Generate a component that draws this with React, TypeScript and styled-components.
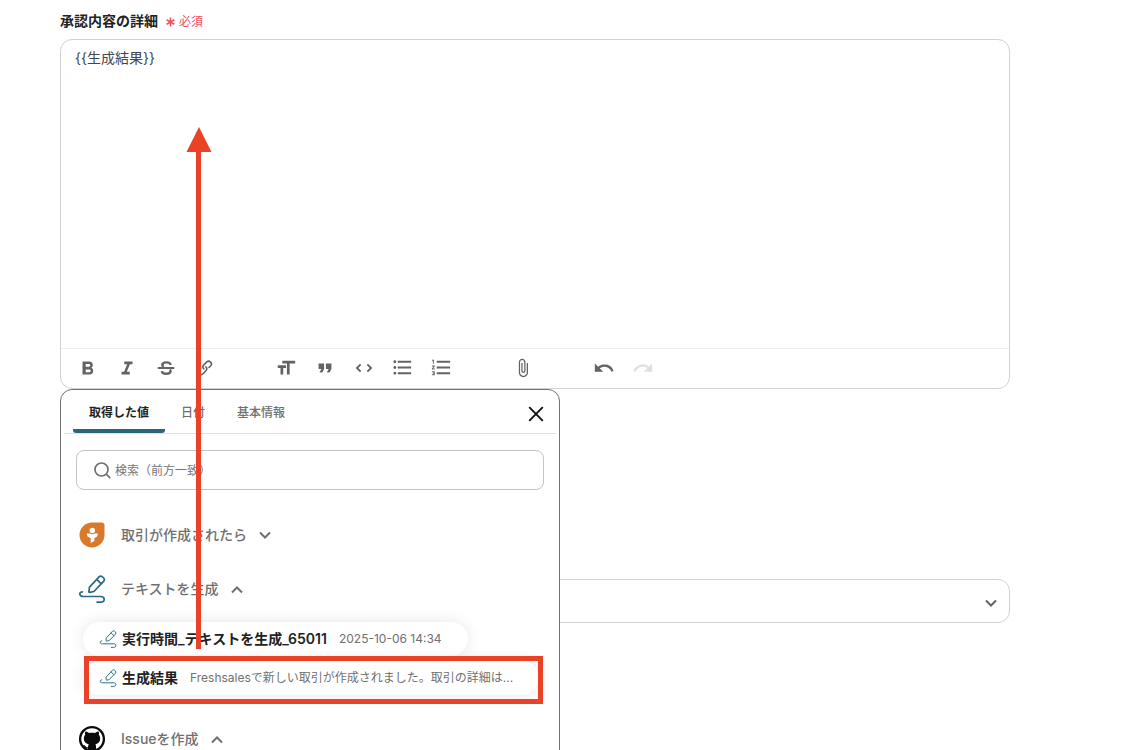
import React from "react";
import styled, { createGlobalStyle, css } from "styled-components";
import { MdAttachFile, MdFormatListBulleted, MdFormatListNumbered } from "react-icons/md";

const GlobalStyle = createGlobalStyle`
  *, *::before, *::after { box-sizing: border-box; }
  body {
    margin: 0;
    background: #fff;
    color: #222;
    font-family: Inter, "Noto Sans CJK JP", sans-serif;
    font-size: 14px;
    line-height: 20px;
  }
  button, input, select, textarea { font: inherit; color: inherit; margin: 0; }
  svg { display: block; flex: none; }
`;

const Page = styled.main`
  height: 100vh;
  overflow: hidden;
  padding: 11px 128px 0 60px;
`;

const FieldLabel = styled.label`
  display: flex;
  align-items: center;
  gap: 8px;
  height: 20px;
  margin-bottom: 8px;
  font-weight: 600;
`;

const Required = styled.span`
  display: inline-flex;
  align-items: center;
  gap: 4px;
  padding-top: 2px;
  color: #f0515f;
  font-size: 12px;
  font-weight: 400;
`;

const EditorArea = styled.div`
  position: relative;
  margin-bottom: 190px;
`;

const Editor = styled.div`
  display: flex;
  flex-direction: column;
  overflow: hidden;
  border: 1px solid #d0d2d8;
  border-radius: 12px;
`;

const EditorText = styled.textarea`
  height: 308px;
  padding: 8px 14px;
  border: 0;
  outline: 0;
  resize: none;
  background: transparent;
  color: #42464e;
`;

const Toolbar = styled.div`
  display: flex;
  gap: 42px;
  height: 40px;
  padding: 0 7px 2px;
  border-top: 1px solid #eeeff0;
`;

const ToolGroup = styled.div`
  display: flex;
`;

const ToolButton = styled.button`
  display: flex;
  align-items: center;
  justify-content: center;
  width: 39px;
  padding: 0;
  border: 0;
  background: none;
  color: #636363;

  &:disabled {
    color: #e0e0e0;
  }
`;

const Picker = styled.section`
  position: absolute;
  top: 350px;
  left: 0;
  z-index: 1;
  width: 500px;
  padding-bottom: 24px;
  border: 1px solid #707375;
  border-radius: 12px;
  background: #fff;
`;

const PickerHeader = styled.header`
  display: flex;
  align-items: stretch;
  justify-content: space-between;
  height: 44px;
  margin: 0 3px;
  padding: 0 9px;
  border-bottom: 1px solid #e2e2e2;
`;

const Tabs = styled.div`
  display: flex;
`;

const Tab = styled.button<{ $active?: boolean }>`
  padding: 3px 16px 0;
  border: 0;
  background: none;
  color: #707070;
  font-size: 12px;
  font-weight: 500;
  ${({ $active }) =>
    $active &&
    css`
      color: #222;
      font-weight: 600;
      background: linear-gradient(#2b657c, #2b657c) bottom / 100% 4px no-repeat;
      border-radius: 3px;
    `}
`;

const CloseButton = styled.button`
  display: flex;
  align-items: center;
  padding: 4px 3px 0;
  border: 0;
  background: none;
  color: #111;
`;

const SearchBox = styled.label`
  display: flex;
  align-items: center;
  gap: 4px;
  height: 40px;
  margin: 16px 15px 31px;
  padding: 0 17px;
  border: 1px solid #c4c4c4;
  border-radius: 8px;
  color: #707070;
`;

const SearchInput = styled.input`
  flex: 1;
  padding: 2px 0 0;
  border: 0;
  outline: 0;
  background: none;
  font-size: 12px;

  &::placeholder {
    color: #777;
    opacity: 1;
  }
`;

const Steps = styled.div`
  display: flex;
  flex-direction: column;
  gap: 26px;
`;

const StepButton = styled.button`
  display: flex;
  align-items: center;
  gap: 15px;
  width: 100%;
  height: 28px;
  padding: 0 17px;
  border: 0;
  background: none;
  color: #707070;
  font-weight: 500;
  text-align: left;
`;

const StepName = styled.span`
  display: flex;
  align-items: center;
  gap: 12px;
`;

const Values = styled.ul`
  display: flex;
  flex-direction: column;
  align-items: flex-start;
  gap: 5px;
  margin: 19px 0 4px;
  padding: 0 20px 0 22px;
  list-style: none;
`;

const ValueItem = styled.li`
  position: relative;
`;

const ValueButton = styled.button`
  display: flex;
  align-items: center;
  height: 34px;
  padding: 0 26px 0 16px;
  border: 0;
  border-radius: 17px;
  background: #fff;
  box-shadow: 0 0 16px rgba(0, 0, 0, 0.1);
  white-space: nowrap;
`;

const ValueName = styled.span`
  margin: 0 12px 0 5px;
  font-weight: 600;
`;

const ValueSample = styled.span`
  color: #707070;
  font-size: 12px;
`;

const Highlight = styled.span`
  position: absolute;
  inset: -5px -4px -9px 1px;
  border: 5px solid #eb4126;
  pointer-events: none;
`;

const Arrow = styled.svg`
  position: absolute;
  top: 88px;
  left: 126px;
  z-index: 2;
  pointer-events: none;
`;

const SelectBox = styled.div`
  position: relative;
  color: #636363;
`;

const Select = styled.select`
  display: block;
  width: 100%;
  height: 44px;
  padding: 0 44px 0 14px;
  border: 1px solid #d0d2d8;
  border-radius: 12px;
  appearance: none;
  background: #fff;
`;

const SelectArrow = styled.span`
  position: absolute;
  top: 4px;
  right: 13px;
  bottom: 0;
  display: flex;
  align-items: center;
  pointer-events: none;
`;

const Glyph = ({ paths, size = 22 }: { paths: string[]; size?: number }) => (
  <svg width={size} height={size} viewBox="0 0 24 24" fill="currentColor" aria-hidden>
    {paths.map((d) => (
      <path key={d} d={d} />
    ))}
  </svg>
);

const StrikeIcon = () => (
  <svg width="22" height="22" viewBox="0 0 24 24" fill="none" stroke="currentColor" aria-hidden>
    <path d="M17 8.500C16.800 6.600 15 5.800 12.500 5.800 10 5.800 8 6.700 8 8.600c0 1 .5 1.700 1.500 2.200M7.500 15.400c.2 2 2.200 2.900 4.800 2.900 2.700 0 4.600-.9 4.600-2.800 0-.7-.2-1.200-.7-1.700" strokeWidth="2.600" />
    <path d="M3 12h18" strokeWidth="2.200" />
  </svg>
);

const AsteriskIcon = () => (
  <svg width="9" height="10" viewBox="0 0 9 10" stroke="currentColor" strokeWidth="1.500" aria-hidden>
    <path d="M4.500 .5v9M.6 2.750l7.800 4.500M8.400 2.750l-7.800 4.500" />
  </svg>
);

const Chevron = ({ up = false }: { up?: boolean }) => (
  <svg width="12" height="12" viewBox="0 0 12 12" fill="none" stroke="currentColor" strokeWidth="2" aria-hidden>
    <path d={up ? "M1 9.500l5-5 5 5" : "M1 3.500l5 5 5-5"} />
  </svg>
);

const PenIcon = ({ size, thin = false }: { size: number; thin?: boolean }) => (
  <svg
    width={size}
    height={size}
    viewBox="0 0 28 28"
    fill="none"
    stroke="#286a84"
    strokeWidth={thin ? 1.5 : 1.7}
    strokeLinecap="round"
    strokeLinejoin="round"
    aria-hidden
  >
    <path d="M11.500 12.200L21 1.900q1.600-1.500 3.400 0l1.100 1q1.700 1.700.1 3.400l-9.700 10.200-4.200.9q-1 .1-.8-.9zM18.700 4.400l4.500 4.400" />
    <path d="M4.300 16.800C1.800 17.300 1.500 18.600 2 19.800c.5 1.500 1.800 1.700 3.400 1.700h17.200c2.300 0 3.600.9 3.600 2.700 0 1.900-1.300 2.900-3.600 2.900h-3.500" />
  </svg>
);

const FreshsalesIcon = () => (
  <svg width="28" height="28" viewBox="0 0 28 28" aria-hidden>
    <path d="M14 1.500h9.500a3 3 0 0 1 3 3V14A12.500 12.500 0 1 1 14 1.500z" fill="#d9792b" />
    <circle cx="14.300" cy="9.500" r="2.700" fill="#fff" />
    <path d="M8.800 12.600h2.700q2.800 1.300 5.600 0h2.700c.2 2.300-1 3.900-3.400 4.500v3L12.700 22v-4.900C9.900 16.500 8.600 14.900 8.800 12.600z" fill="#fff" />
  </svg>
);

const GithubIcon = () => (
  <svg width="28" height="28" viewBox="0 0 28 28" aria-hidden>
    <circle cx="14" cy="14" r="11.900" fill="#fff" stroke="#0b0b0b" strokeWidth="2.300" />
    <path
      fill="#0b0b0b"
      d="M7.400 6.500c1.300 0 2.600.7 3.600 1.500 1.900-.4 4.100-.4 6 0 1-.8 2.300-1.500 3.600-1.500.5 1.200.5 2.400.2 3.300 1 1.100 1.300 2.300 1.300 3.700 0 3.600-2 5.200-4.700 5.700.4.600.6 1.300.6 2.200v3.900q-4 1.400-8 0v-2c-2.200.4-3-.4-3.700-1.600-.4-.7-.8-1.200-1.500-1.600 1.500-.3 2.300.4 3 1.400.6.8 1.200 1 2.200.8.100-1.300.3-2.400.8-3.100-2.800-.5-4.900-2.100-4.900-5.700 0-1.400.4-2.600 1.300-3.700-.3-1-.3-2.100.2-3.300z"
    />
  </svg>
);

type Tool = { name: string; icon: React.ReactNode; disabled?: boolean };

const toolGroups: Tool[][] = [
  [
    {
      name: "太字",
      icon: (
        <Glyph paths={["M15.600 11.800c1-.7 1.600-1.800 1.600-2.800a4 4 0 0 0-4-4H6v14h8c2.100 0 3.700-1.700 3.700-3.800 0-1.500-.8-2.800-2.100-3.400zM9.500 7.500H13a1.500 1.500 0 1 1 0 3H9.500v-3zm4 9h-4v-3h4a1.500 1.500 0 1 1 0 3z"]} />
      ),
    },
    { name: "斜体", icon: <Glyph paths={["M9 5v3h3.200l-3.400 8H6v3h9v-3h-3.200l3.400-8H18V5H9z"]} /> },
    { name: "取り消し線", icon: <StrikeIcon /> },
    {
      name: "リンク",
      icon: (
        <Glyph
          size={20}
          paths={[
            "M9.880 13.700a4.300 4.300 0 0 1 0-6.070l3.370-3.370a4.260 4.260 0 0 1 6.070 0 4.300 4.300 0 0 1 0 6.060l-1.960 1.720a.910.910 0 1 1-1.300-1.300l1.970-1.710a2.460 2.460 0 0 0-3.480-3.480l-3.380 3.370a2.460 2.460 0 0 0 0 3.480.910.910 0 1 1-1.300 1.300z",
            "M4.250 19.460a4.300 4.300 0 0 1 0-6.070l1.930-1.900a.910.910 0 1 1 1.300 1.300l-1.930 1.900a2.460 2.460 0 0 0 3.480 3.480l3.370-3.380c.960-.960.960-2.520 0-3.480a.910.910 0 1 1 1.300-1.300 4.300 4.300 0 0 1 0 6.070l-3.380 3.380a4.260 4.260 0 0 1-6.070 0z",
          ]}
        />
      ),
    },
  ],
  [
    { name: "見出し", icon: <Glyph paths={["M12 9v3H9v7H6v-7H3V9h9zM8 4h14v3h-6v12h-3V7H8V4z"]} /> },
    { name: "引用", icon: <Glyph paths={["M6 17h3l2-4V7H5v6h3zm8 0h3l2-4V7h-6v6h3z"]} /> },
    {
      name: "コード",
      icon: (
        <Glyph paths={["M18.200 12L15 15.200l1.400 1.400L21 12l-4.600-4.600L15 8.800l3.200 3.200zM5.800 12L9 8.800 7.600 7.400 3 12l4.600 4.600L9 15.200 5.800 12z"]} />
      ),
    },
    { name: "箇条書き", icon: <MdFormatListBulleted size={23} /> },
    { name: "番号付きリスト", icon: <MdFormatListNumbered size={23} /> },
  ],
  [{ name: "添付", icon: <MdAttachFile size={20} /> }],
  [
    {
      name: "元に戻す",
      icon: (
        <Glyph paths={["M12.500 8c-2.600 0-5 1-6.900 2.600L2 7v9h9l-3.600-3.600A8 8 0 0 1 20 16l2.400-.8a10.500 10.500 0 0 0-10-7.200z"]} />
      ),
    },
    {
      name: "やり直す",
      disabled: true,
      icon: (
        <Glyph paths={["M18.400 10.600a10.500 10.500 0 0 0-16.900 4.600L4 16a8 8 0 0 1 12.700-3.600L13 16h9V7l-3.600 3.600z"]} />
      ),
    },
  ],
];

const Step = ({ icon, name, open }: { icon: React.ReactNode; name: string; open?: boolean }) => (
  <StepButton type="button" aria-expanded={!!open}>
    {icon}
    <StepName>
      {name}
      <Chevron up={open} />
    </StepName>
  </StepButton>
);

const Value = ({ name, sample, highlighted }: { name: string; sample: string; highlighted?: boolean }) => (
  <ValueItem>
    <ValueButton type="button">
      <PenIcon size={18} thin />
      <ValueName>{name}</ValueName>
      <ValueSample>{sample}</ValueSample>
    </ValueButton>
    {highlighted && <Highlight />}
  </ValueItem>
);

export default function App() {
  return (
    <>
      <GlobalStyle />
      <Page>
        <FieldLabel htmlFor="detail">
          承認内容の詳細
          <Required>
            <AsteriskIcon />
            必須
          </Required>
        </FieldLabel>
        <EditorArea>
          <Editor>
            <EditorText id="detail" defaultValue="{{生成結果}}" />
            <Toolbar>
              {toolGroups.map((tools) => (
                <ToolGroup key={tools[0].name}>
                  {tools.map((tool) => (
                    <ToolButton key={tool.name} type="button" aria-label={tool.name} disabled={tool.disabled}>
                      {tool.icon}
                    </ToolButton>
                  ))}
                </ToolGroup>
              ))}
            </Toolbar>
          </Editor>

          <Picker>
            <PickerHeader>
              <Tabs role="tablist">
                <Tab type="button" role="tab" aria-selected $active>
                  取得した値
                </Tab>
                <Tab type="button" role="tab">日付</Tab>
                <Tab type="button" role="tab">基本情報</Tab>
              </Tabs>
              <CloseButton type="button" aria-label="閉じる">
                <svg width="16" height="16" viewBox="0 0 16 16" stroke="currentColor" strokeWidth="1.900" strokeLinecap="round">
                  <path d="M1.700 1.700l12.600 12.600M14.300 1.700L1.700 14.300" />
                </svg>
              </CloseButton>
            </PickerHeader>
            <SearchBox>
              <svg width="17" height="17" viewBox="0 0 17 17" fill="none" stroke="currentColor" strokeWidth="1.700" aria-hidden>
                <circle cx="7.500" cy="7.500" r="6.500" />
                <path d="M12.200 12.200l4 4" />
              </svg>
              <SearchInput type="text" aria-label="検索" placeholder="検索（前方一致）" />
            </SearchBox>
            <Steps>
              <Step icon={<FreshsalesIcon />} name="取引が作成されたら" />
              <div>
                <Step icon={<PenIcon size={28} />} name="テキストを生成" open />
                <Values>
                  <Value name="実行時間_テキストを生成_65011" sample="2025-10-06 14:34" />
                  <Value
                    name="生成結果"
                    sample="Freshsalesで新しい取引が作成されました。取引の詳細は..."
                    highlighted
                  />
                </Values>
              </div>
              <Step icon={<GithubIcon />} name="Issueを作成" open />
            </Steps>
          </Picker>

          <Arrow width="26" height="522" viewBox="0 0 26 522" fill="#eb4126" aria-hidden>
            <path d="M13 0l12.500 25H15v497h-5V25H.5z" />
          </Arrow>
        </EditorArea>

        <SelectBox>
          <Select aria-label="選択" defaultValue="">
            <option value="" />
          </Select>
          <SelectArrow>
            <Chevron />
          </SelectArrow>
        </SelectBox>
      </Page>
    </>
  );
}
